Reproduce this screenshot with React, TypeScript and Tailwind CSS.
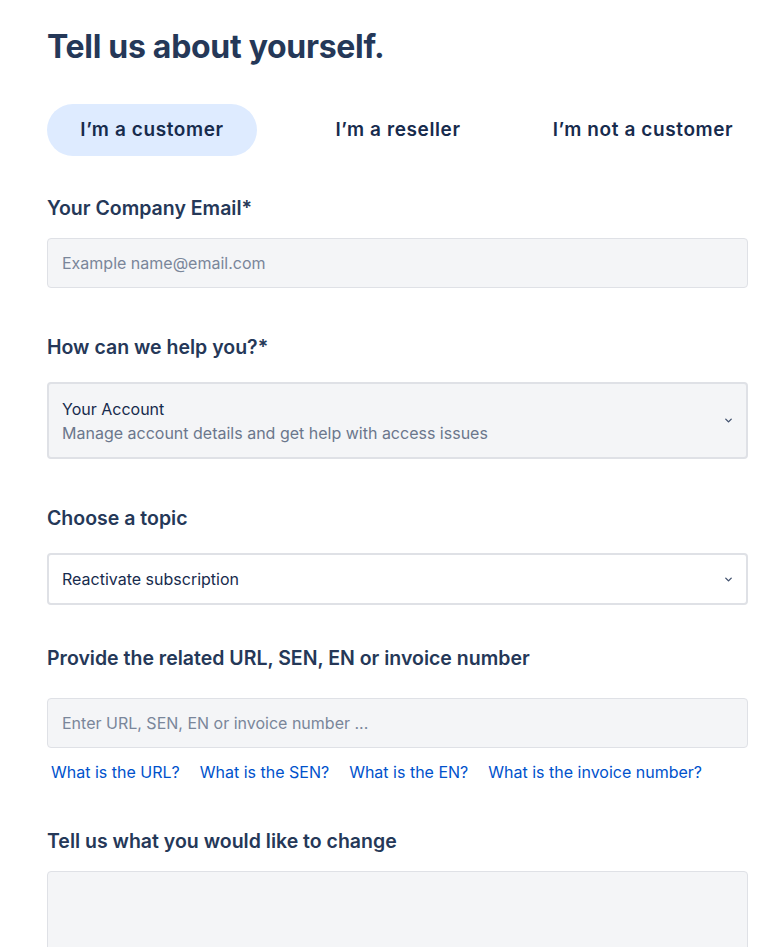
import { ChevronDown } from 'lucide-react';

const tabs = ["I’m a customer", "I’m a reseller", "I’m not a customer"];
const links = ['What is the URL?', 'What is the SEN?', 'What is the EN?', 'What is the invoice number?'];

function Label({ children }: { children: React.ReactNode }) {
  return <p className="text-[19.5px] font-semibold text-[#253858] leading-6">{children}</p>;
}

export default function App() {
  return (
    <div className="bg-white font-['Inter',sans-serif] pl-[47px] pr-[28px] pt-[27px] w-[776px] overflow-hidden h-[947px]">
      <h1 className="text-[32px] font-bold text-[#253858] leading-10 tracking-[-0.3px]">Tell us about yourself.</h1>

      {/* Tabs */}
      <div className="flex items-center mt-[37px] h-[52px]">
        {tabs.map((t, i) => (
          <button
            key={i}
            className={`h-[52px] rounded-full text-[19px] tracking-[0.6px] font-semibold text-[#172B4D] ${
              i === 0 ? 'bg-[#DEEBFF] w-[210px]' : i === 1 ? 'w-[282px]' : 'w-[208px]'
            }`}
          >
            {t}
          </button>
        ))}
      </div>

      <div className="mt-[40px]">
        <Label>Your Company Email*</Label>
        <div className="mt-[18px] h-[50px] rounded bg-[#F4F5F7] border border-[#DFE1E6] flex items-center px-[14px] text-[16px] text-[#7A869A]">
          Example name@email.com
        </div>
      </div>

      <div className="mt-[47px]">
        <Label>How can we help you?*</Label>
        <div className="mt-[23px] h-[77px] rounded bg-[#F4F5F7] border-2 border-[#DFE1E6] flex items-center justify-between pl-[13px] pr-[12px]">
          <div className="leading-6">
            <p className="text-[16px] text-[#172B4D]">Your Account</p>
            <p className="text-[16px] text-[#6B778C]">Manage account details and get help with access issues</p>
          </div>
          <ChevronDown className="w-[11px] h-[11px] text-[#42526E]" strokeWidth={3} />
        </div>
      </div>

      <div className="mt-[47px]">
        <Label>Choose a topic</Label>
        <div className="mt-[23px] h-[52px] rounded bg-white border-2 border-[#DFE1E6] flex items-center justify-between pl-[13px] pr-[12px]">
          <p className="text-[16px] text-[#172B4D]">Reactivate subscription</p>
          <ChevronDown className="w-[11px] h-[11px] text-[#42526E]" strokeWidth={3} />
        </div>
      </div>

      <div className="mt-[41px]">
        <Label>Provide the related URL, SEN, EN or invoice number</Label>
        <div className="mt-[28px] h-[50px] rounded bg-[#F4F5F7] border border-[#DFE1E6] flex items-center px-[14px] text-[16px] text-[#7A869A]">
          Enter URL, SEN, EN or invoice number ...
        </div>
        <div className="flex gap-[20px] mt-[14px] pl-[4px]">
          {links.map((l, i) => (
            <a key={i} href="#" className="text-[16px] text-[#0052CC] leading-5">{l}</a>
          ))}
        </div>
      </div>

      <div className="mt-[47px]">
        <Label>Tell us what you would like to change</Label>
        <div className="mt-[18px] h-[120px] rounded bg-[#F4F5F7] border border-[#DFE1E6]" />
      </div>
    </div>
  );
}
